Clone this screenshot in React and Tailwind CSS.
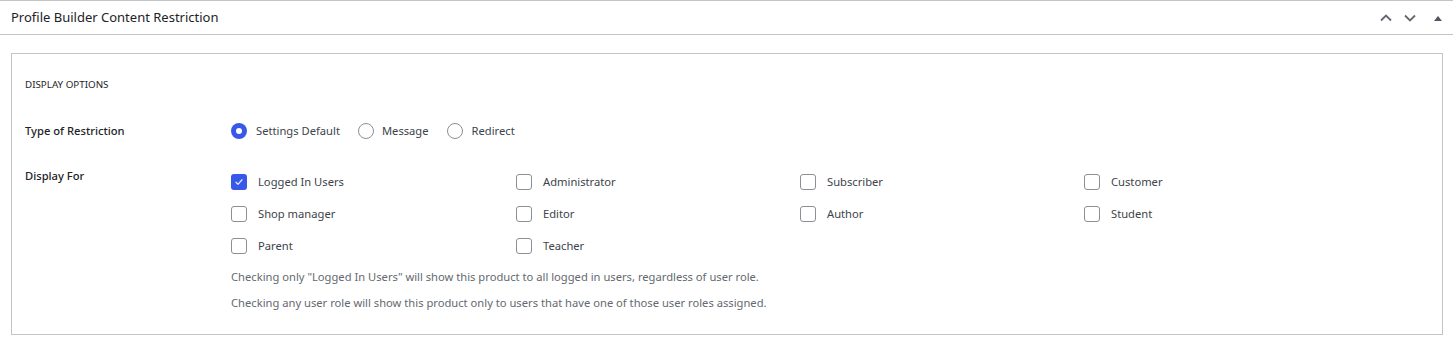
import React from 'react';

const roles = [
  ['Logged In Users', true],
  ['Administrator', false],
  ['Subscriber', false],
  ['Customer', false],
  ['Shop manager', false],
  ['Editor', false],
  ['Author', false],
  ['Student', false],
  ['Parent', false],
  ['Teacher', false],
];

const Checkbox = ({ checked }) =>
  checked ? (
    <span className="w-4 h-4 rounded-[3px] bg-[#3858e9] flex items-center justify-center shrink-0">
      <svg width="12" height="12" viewBox="0 0 12 12" fill="none">
        <path d="M3 6.3l2 2.1L9 3.8" stroke="#dfe5ff" strokeWidth="1.3" strokeLinecap="round" strokeLinejoin="round" />
      </svg>
    </span>
  ) : (
    <span className="w-4 h-4 rounded-[3px] border border-[#8c8f94] bg-white shrink-0" />
  );

const Radio = ({ checked }) =>
  checked ? (
    <span className="w-4 h-4 rounded-full bg-[#3858e9] flex items-center justify-center shrink-0">
      <span className="w-[6px] h-[6px] rounded-full bg-white" />
    </span>
  ) : (
    <span className="w-4 h-4 rounded-full border border-[#8c8f94] bg-white shrink-0" />
  );

const App = () => {
  return (
    <div className="w-[1453px] h-[347px] bg-white text-[#3c434a] font-['Noto_Sans',sans-serif]">
      <div className="h-[35px] border-t border-b border-[#c3c4c7] flex items-center pl-[11px] pr-[8px]">
        <h2 className="text-[13px] text-[#1d2327] flex-1 leading-none">Profile Builder Content Restriction</h2>
        <div className="flex items-center gap-[10px]">
          <svg width="14" height="14" viewBox="0 0 14 14" fill="none">
            <path d="M2 9.5L7 4.5l5 5" stroke="#646970" strokeWidth="1.8" />
          </svg>
          <svg width="14" height="14" viewBox="0 0 14 14" fill="none">
            <path d="M2 4.5L7 9.5l5-5" stroke="#646970" strokeWidth="1.8" />
          </svg>
          <svg width="14" height="14" viewBox="0 0 14 14" className="ml-[4px]">
            <path d="M3 10L7 5l4 5z" fill="#50575e" />
          </svg>
        </div>
      </div>

      <div className="mt-[18px] ml-[11px] w-[1432px] h-[282px] border border-[#c3c4c7] pl-[13px] pt-[24px]">
        <h3 className="text-[9.8px] uppercase text-[#1d2327] leading-[14px]">Display Options</h3>

        <div className="flex items-center mt-[30px] h-[18px]">
          <div className="w-[206px] text-[11.2px] font-medium text-[#1d2327]">Type of Restriction</div>
          <div className="flex items-center text-[11.2px]">
            <label className="flex items-center gap-[9px] mr-[18px]">
              <Radio checked />
              <span>Settings Default</span>
            </label>
            <label className="flex items-center gap-[8px] mr-[18px]">
              <Radio />
              <span>Message</span>
            </label>
            <label className="flex items-center gap-[9px]">
              <Radio />
              <span>Redirect</span>
            </label>
          </div>
        </div>

        <div className="flex mt-[26px]">
          <div className="w-[206px] text-[11.2px] font-medium text-[#1d2327] leading-[18px] pt-[1px]">Display For</div>
          <div className="flex-1">
            <div className="grid grid-cols-[285px_284px_284px_1fr] gap-y-[14px] pt-[7px]">
              {roles.map(([name, checked]) => (
                <label key={name} className="flex items-center gap-[11px] h-[18px] text-[11.2px]">
                  <Checkbox checked={checked} />
                  <span>{name}</span>
                </label>
              ))}
            </div>
            <p className="text-[11.2px] text-[#646970] mt-[13px] leading-[18px]">
              Checking only "Logged In Users" will show this product to all logged in users, regardless of user role.
            </p>
            <p className="text-[11.2px] text-[#646970] mt-[8px] leading-[18px]">
              Checking any user role will show this product only to users that have one of those user roles assigned.
            </p>
          </div>
        </div>
      </div>
    </div>
  );
};

export default App;
